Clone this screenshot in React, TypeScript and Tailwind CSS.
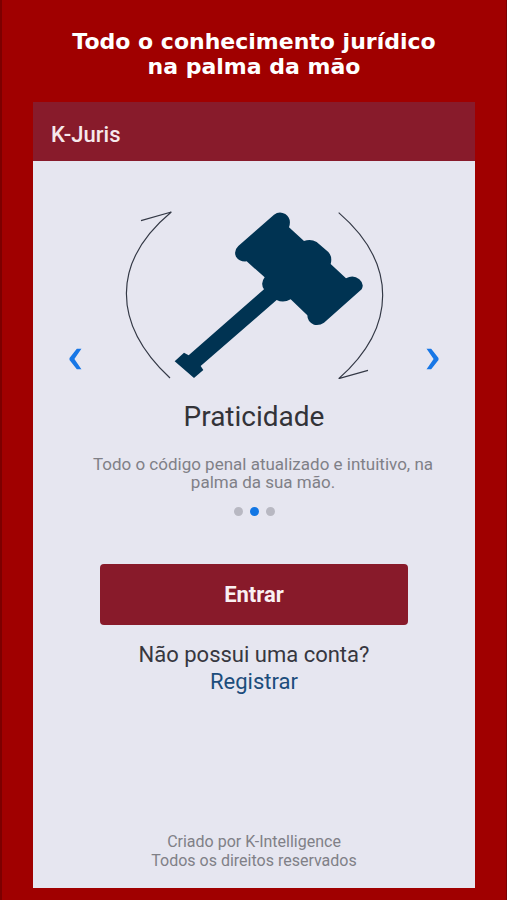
import React, { useState } from 'react';

const SLIDES = ['Agilidade', 'Praticidade', 'Confiança'];

function Gavel() {
  return (
    <svg viewBox="36 57 792 510" className="w-[264px] h-[170px] mx-auto" fill="none" aria-hidden="true">
      {/* rotation arrows */}
      <g stroke="#333845" strokeWidth="3.5">
        <path d="M180 564C5 400 5 215 184 66L93 92" />
        <path d="M686 68C862 220 862 410 686 566L774 541" />
      </g>
      <path
        fill="#003352"
        d="M385 168L492 74Q508 62 526 72Q546 86 537 112L582 153Q602 145 620 156L655 186Q668 200 662 222L708 265Q730 252 748 268Q764 282 755 298L642 398Q628 408 612 404Q592 396 592 376L542 328Q520 340 500 330L272 528L280 540L252 564L194 514L222 488L236 496L462 298Q450 280 464 262L410 214Q388 216 378 200Q370 182 385 168Z"
      />
    </svg>
  );
}

function Chevron({ flip = false }: { flip?: boolean }) {
  return (
    <svg viewBox="0 0 13 21" className={`w-[13px] h-[21px] ${flip ? 'rotate-180' : ''}`} aria-hidden="true">
      <path d="M8 0H12.6L5.4 10.5L12.6 21H8L0.5 11.5V9.5Z" fill="#1877e6" />
    </svg>
  );
}

export default function App() {
  const [active, setActive] = useState(1);

  const move = (step: number) => {
    setActive((active + step + SLIDES.length) % SLIDES.length);
  };

  return (
    <div className="min-h-screen flex flex-col bg-[#a00000] border-l-2 border-r border-[#7c0000] px-[31px] pb-3 font-['Roboto',sans-serif]">
      <h1 className="pt-[29px] pb-[23px] text-center text-[22px] leading-[25px] font-bold text-white font-['DejaVu_Sans',sans-serif]">
        Todo o conhecimento jurídico
        <br />
        na palma da mão
      </h1>

      <div className="flex-1 flex flex-col bg-[#e6e6f0]">
        <header className="h-[59px] flex items-center pt-1.5 px-[18px] bg-[#881b2b]">
          <span className="text-[22px] font-medium text-[#f6e9ec]">K-Juris</span>
        </header>

        <main className="flex-1 flex flex-col">
          <section className="relative mt-10 pt-2 text-center" aria-label="Apresentação">
            <Gavel />
            <h2 className="mt-5 text-[28px] leading-9 text-[#333338]">Praticidade</h2>
            <p className="mt-5 pl-[52px] pr-[34px] text-[17px] leading-[18px] text-[#808087]">
              Todo o código penal atualizado e intuitivo, na palma da sua mão.
            </p>
            <div className="mt-4 flex justify-center gap-[7px]">
              {SLIDES.map((slide, i) => (
                <button
                  key={slide}
                  aria-label={slide}
                  onClick={() => setActive(i)}
                  className={`w-[9px] h-[9px] rounded-full ${i === active ? 'bg-[#1276e4]' : 'bg-[#b8b8c2]'}`}
                />
              ))}
            </div>
            <button aria-label="Anterior" onClick={() => move(-1)} className="absolute left-9 top-1/2 -translate-y-1/2">
              <Chevron />
            </button>
            <button aria-label="Próximo" onClick={() => move(1)} className="absolute right-9 top-1/2 -translate-y-1/2">
              <Chevron flip />
            </button>
          </section>

          <div className="mt-12 px-[67px]">
            <button className="w-full h-[61px] rounded bg-[#881a2a] text-[22px] font-bold text-[#faf0f2]">
              Entrar
            </button>
          </div>

          <div className="mt-4 text-center text-[22px] leading-[27px] text-[#37373f]">
            <p>Não possui uma conta?</p>
            <a href="#registrar" className="text-[#1c4d7c]">Registrar</a>
          </div>
        </main>

        <footer className="pb-[18px] text-center text-base leading-[19px] text-[#808087]">
          <p>Criado por K-Intelligence</p>
          <p>Todos os direitos reservados</p>
        </footer>
      </div>
    </div>
  );
}
